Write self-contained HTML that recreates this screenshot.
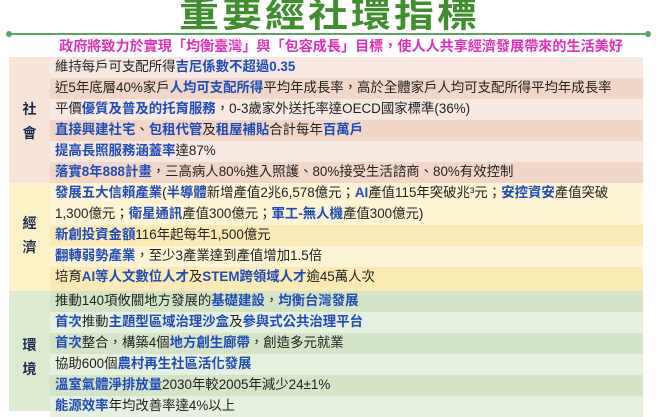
<!DOCTYPE html><html><head><meta charset="utf-8"><style>
body{margin:0;width:656px;height:411px;overflow:hidden;background:#fff;font-family:"Liberation Sans","Noto Sans CJK TC",sans-serif;}
.t{position:absolute;left:0;width:656px;top:-3px;text-align:center;font-size:40px;font-weight:bold;color:#3f8f2f;letter-spacing:3px;text-indent:3px;line-height:38px;transform:scaleY(0.85)}
.ln{position:absolute;left:8px;width:640px;top:33px;height:2px;background:#5aa56a}
.d{position:absolute;top:31px;width:6px;height:6px;border-radius:3px;background:#5aa56a}
.s{position:absolute;left:0;width:682px;top:37px;text-align:center;font-size:14.1px;font-weight:bold;color:#e030b8;line-height:18px}
.r{position:absolute;left:50px;width:593px;font-size:13.4px;color:#222;line-height:20.5px;padding-left:5px;box-sizing:border-box;white-space:nowrap}
.r b{color:#1f4cb8}
.lab{position:absolute;left:9px;width:41px;font-weight:bold;color:#1d2b4f;font-size:14px;text-align:center;line-height:24px}
</style></head><body>
<div class="t">重要經社環指標</div>
<div class="ln"></div><div class="d" style="left:6px"></div><div class="d" style="left:645px"></div>
<div class="s">政府將致力於實現「均衡臺灣」與「包容成長」目標，使人人共享經濟發展帶來的生活美好</div>
<div class="lab" style="top:57px;height:126px;background:#f7e3d8;padding-top:40px;box-sizing:border-box">社<br>會</div>
<div class="lab" style="top:183px;height:108px;background:#fdf1c6;padding-top:28px;box-sizing:border-box">經<br>濟</div>
<div class="lab" style="top:291px;height:120px;background:#dcebd0;padding-top:42px;box-sizing:border-box">環<br>境</div>
<div class="r" style="top:57px;height:21px;background:#f7e8e1">維持每戶可支配所得<b>吉尼係數不超過0.35</b></div>
<div class="r" style="top:78px;height:21px;background:#f2d7c8">近5年底層40%家戶<b>人均可支配所得</b>平均年成長率，高於全體家戶人均可支配所得平均年成長率</div>
<div class="r" style="top:99px;height:21px;background:#f7e8e1">平價<b>優質及普及的托育服務</b>，0-3歲家外送托率達OECD國家標準(36%)</div>
<div class="r" style="top:120px;height:21px;background:#f2d7c8"><b>直接興建社宅</b>、<b>包租代管</b>及<b>租屋補貼</b>合計每年<b>百萬戶</b></div>
<div class="r" style="top:141px;height:21px;background:#f7e8e1"><b>提高長照服務涵蓋率</b>達87%</div>
<div class="r" style="top:162px;height:21px;background:#f2d7c8"><b>落實8年888計畫</b>，三高病人80%進入照護、80%接受生活諮商、80%有效控制</div>
<div class="r" style="top:183px;height:42px;background:#fdf4d3;white-space:normal"><b>發展五大信賴產業</b>(<b>半導體</b>新增產值2兆6,578億元；<b>AI</b>產值115年突破兆³元；<b>安控資安</b>產值突破<br>1,300億元；<b>衛星通訊</b>產值300億元；<b>軍工-無人機</b>產值300億元)</div>
<div class="r" style="top:225px;height:21px;background:#fbeab3"><b>新創投資金額</b>116年起每年1,500億元</div>
<div class="r" style="top:246px;height:21px;background:#fdf4d3"><b>翻轉弱勢產業</b>，至少3產業達到產值增加1.5倍</div>
<div class="r" style="top:267px;height:24px;background:#fbeab3">培育<b>AI等人文數位人才</b>及<b>STEM跨領域人才</b>逾45萬人次</div>
<div class="r" style="top:291px;height:21px;background:#d3e5c6">推動140項攸關地方發展的<b>基礎建設</b>，<b>均衡台灣發展</b></div>
<div class="r" style="top:312px;height:21px;background:#e6f0de"><b>首次</b>推動<b>主題型區域治理沙盒</b>及<b>參與式公共治理平台</b></div>
<div class="r" style="top:333px;height:21px;background:#d3e5c6"><b>首次</b>整合，構築4個<b>地方創生廊帶</b>，創造多元就業</div>
<div class="r" style="top:354px;height:21px;background:#e6f0de">協助600個<b>農村再生社區活化發展</b></div>
<div class="r" style="top:375px;height:21px;background:#d3e5c6"><b>溫室氣體淨排放量</b>2030年較2005年減少24±1%</div>
<div class="r" style="top:396px;height:21px;background:#e6f0de"><b>能源效率</b>年均改善率達4%以上</div>
</body></html>
